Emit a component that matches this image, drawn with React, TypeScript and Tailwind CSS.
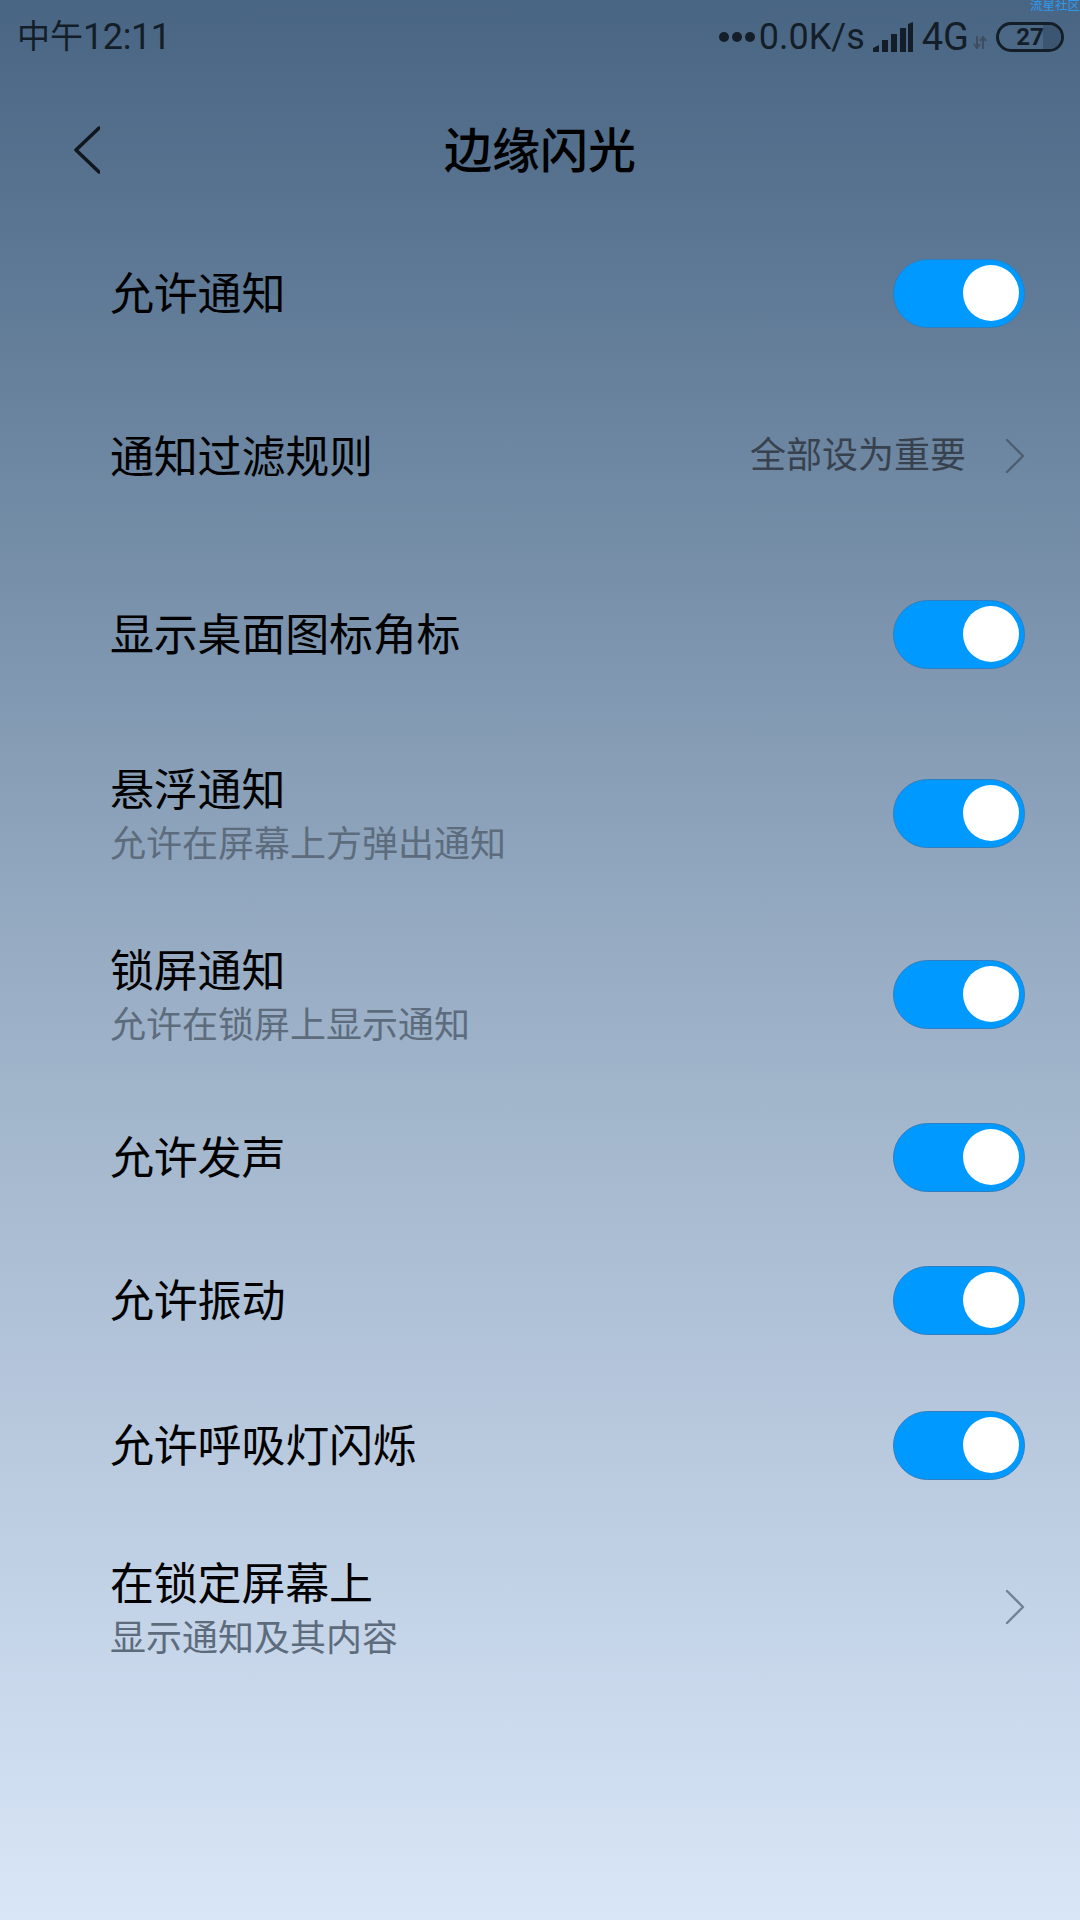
const FONT = "font-['Roboto','Noto_Sans_CJK_SC',sans-serif]";

function Toggle() {
  return (
    <div className="flex h-[69px] w-[132px] shrink-0 items-center justify-end rounded-full border border-[#2f7fc0] bg-[#0099ff] pr-[5px]">
      <div className="h-[56px] w-[56px] rounded-full bg-white" />
    </div>
  );
}

function Chevron({ className }: { className: string }) {
  return (
    <svg viewBox="0 0 20 36" className={className} fill="none" stroke="currentColor" strokeWidth="2.4" strokeLinecap="round" strokeLinejoin="round">
      <path d="M2 2 L18 18 L2 34" />
    </svg>
  );
}

function Row({ title, sub, className, children }: { title: string; sub?: string; className: string; children: React.ReactNode }) {
  return (
    <div className={`flex items-center justify-between pl-[110px] pr-[55px] ${className}`}>
      <div className={`flex flex-col ${sub ? "pt-[6px]" : "pt-[4px]"}`}>
        <span className="text-[44px] leading-[52px] tracking-[-0.2px] text-black">{title}</span>
        {sub && <span className="mt-[5px] text-[36px] leading-[46px] text-[#5d6c7c]">{sub}</span>}
      </div>
      {children}
    </div>
  );
}

function StatusBar() {
  return (
    <div className="relative flex h-[72px] items-center justify-between pl-[17px] pr-[16px] pt-[1px] text-[36px] text-[#141e28]">
      <span className="absolute right-0 top-[-3px] text-[12.5px] leading-[18px] text-[#2f9bf0]">流星社区</span>
      <span className="flex items-center leading-none">
        <span className="text-[33px]">中午</span>
        <span className="tracking-[-0.4px]">12:11</span>
      </span>
      <div className="flex items-center">
        <div className="flex gap-[3px]">
          <span className="h-[10px] w-[10px] rounded-full bg-[#141e28]" />
          <span className="h-[10px] w-[10px] rounded-full bg-[#141e28]" />
          <span className="h-[10px] w-[10px] rounded-full bg-[#141e28]" />
        </div>
        <span className="ml-[4px] leading-none">0.0K/s</span>
        <svg viewBox="0 0 40 30" className="ml-[8px] h-[30px] w-[40px]" fill="#141e28">
          <path d="M0 30V26L6 23V30Z" />
          <rect x="9" y="18" width="6" height="12" />
          <rect x="18" y="12" width="6" height="18" />
          <rect x="27" y="6" width="6" height="24" />
          <path d="M35 2L40 0V30H35Z" />
        </svg>
        <span className="ml-[9px] text-[38px] leading-none">4G</span>
        <svg viewBox="0 0 14 13" className="ml-[4px] mt-[12px] h-[13px] w-[14px]" fill="none" stroke="#3e4e60" strokeWidth="2">
          <path d="M4 0V11M1 8L4 12L7 8M10 13V2M7 5L10 1L13 5" />
        </svg>
        <div className="relative ml-[9px] flex h-[30px] w-[68px] items-center justify-center overflow-hidden rounded-full border-[3px] border-[#141e28] text-[24px] font-bold leading-none">
          <div className="absolute bottom-0 right-0 top-0 w-[18px] bg-[#3c5570]" />
          <span className="relative">27</span>
        </div>
      </div>
    </div>
  );
}

export default function App() {
  return (
    <div className={`h-[1920px] w-[1080px] bg-gradient-to-b from-[#486583] via-[#98adc4] via-50% to-[#d9e6f8] ${FONT}`}>
      <StatusBar />
      <div className="relative flex h-[156px] items-center justify-center pt-[3px]">
        <svg viewBox="0 0 26 48" className="absolute left-[74px] top-[54px] h-[48px] w-[26px] text-[#10171f]" fill="none" stroke="currentColor" strokeWidth="3.5" strokeLinecap="round" strokeLinejoin="round">
          <path d="M25 2 L2 24 L25 46" />
        </svg>
        <span className="text-[48px] font-medium text-black">边缘闪光</span>
      </div>
      <Row title="允许通知" className="h-[130px]"><Toggle /></Row>
      <Row title="通知过滤规则" className="h-[196px]">
        <div className="flex items-center">
          <span className="text-[36px] text-[#38424e]">全部设为重要</span>
          <Chevron className="ml-[39px] h-[36px] w-[20px] text-[#4f5f72]" />
        </div>
      </Row>
      <Row title="显示桌面图标角标" className="h-[160px]"><Toggle /></Row>
      <Row title="悬浮通知" sub="允许在屏幕上方弹出通知" className="h-[198px]"><Toggle /></Row>
      <Row title="锁屏通知" sub="允许在锁屏上显示通知" className="h-[164px]"><Toggle /></Row>
      <Row title="允许发声" className="h-[162px]"><Toggle /></Row>
      <Row title="允许振动" className="h-[124px]"><Toggle /></Row>
      <Row title="允许呼吸灯闪烁" className="h-[166px]"><Toggle /></Row>
      <Row title="在锁定屏幕上" sub="显示通知及其内容" className="h-[158px]">
        <Chevron className="h-[36px] w-[20px] text-[#708296]" />
      </Row>
    </div>
  );
}
